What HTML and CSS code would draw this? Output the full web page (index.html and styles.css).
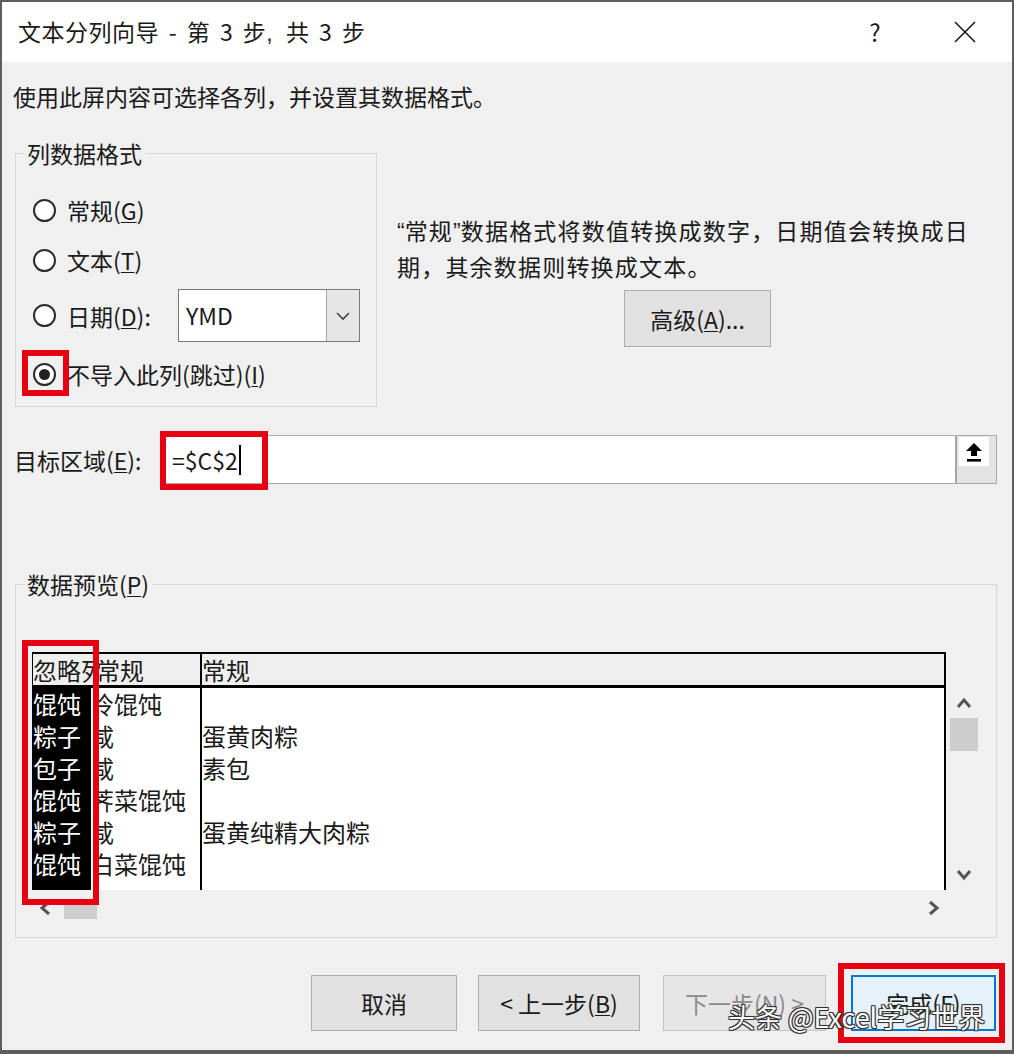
FILE: index.html
```html
<!DOCTYPE html>
<html lang="zh-CN">
<head>
<meta charset="utf-8">
<title>文本分列向导</title>
<link rel="stylesheet" href="styles.css">
</head>
<body>
<div class="window">
  <div class="titlebar">
    <span class="title">文本分列向导 - 第 3 步<span class="narrow">,</span> 共 3 步</span>
    <span class="tb-help">?</span>
    <span class="tb-close">
      <svg width="22" height="22" viewBox="0 0 22 22"><path d="M1 1 L21 21 M21 1 L1 21" stroke="#1a1a1a" stroke-width="1.6" fill="none"/></svg>
    </span>
  </div>

  <div class="content">
    <p class="intro">使用此屏内容可选择各列，并设置其数据格式。</p>

    <div class="top-row">
      <fieldset class="group format">
        <legend>列数据格式</legend>
        <div class="radio-row r1"><span class="radio"></span><span class="radio-text">常规(<u>G</u>)</span></div>
        <div class="radio-row r2"><span class="radio"></span><span class="radio-text">文本(<u>T</u>)</span></div>
        <div class="radio-row r3"><span class="radio"></span><span class="radio-text date-label">日期(<u>D</u>):</span>
          <div class="combo"><span class="combo-val">YMD</span><span class="combo-btn"><svg width="16" height="10" viewBox="0 0 16 10"><polyline points="2,2 8,8 14,2" fill="none" stroke="#444" stroke-width="1.6"/></svg></span></div>
        </div>
        <div class="radio-row r4"><span class="radio checked"></span><span class="radio-text">不导入此列(跳过)(<u>I</u>)</span></div>
      </fieldset>

      <div class="desc">
        <p class="desc-text"><span class="q">“</span>常规<span class="q">”</span>数据格式将数值转换成数字，日期值会转换成日<br>期，其余数据则转换成文本。</p>
        <div class="btn adv">高级(<u>A</u>)...</div>
      </div>
    </div>

    <div class="target-row">
      <span class="target-label">目标区域(<u>E</u>):</span>
      <div class="target-input">
        <span class="target-val">=$C$2</span><span class="caret"></span>
        <span class="collapse-btn">
          <span class="collapse-face">
            <svg width="20" height="22" viewBox="0 0 20 22"><path d="M10 2 L2 10 L7 10 L7 15 L13 15 L13 10 L18 10 Z" fill="#000"/><rect x="3" y="18" width="14" height="2.6" fill="#000"/></svg>
          </span>
        </span>
      </div>
    </div>

    <fieldset class="group preview">
      <legend>数据预览(<u>P</u>)</legend>
      <div class="grid-wrap">
        <div class="grid">
          <div class="ghead">
            <div class="h1">忽略列</div>
            <div class="h2">常规</div>
            <div class="h3">常规</div>
          </div>
          <div class="gdata">
            <div class="dcol1">
              <div>馄饨</div><div>粽子</div><div>包子</div><div>馄饨</div><div>粽子</div><div>馄饨</div>
            </div>
            <div class="dcol2">
              <div>冷馄饨</div><div>咸</div><div>咸</div><div>荠菜馄饨</div><div>咸</div><div>白菜馄饨</div>
            </div>
            <div class="dcol3">
              <div>&nbsp;</div><div>蛋黄肉粽</div><div>素包</div><div>&nbsp;</div><div>蛋黄纯精大肉粽</div><div>&nbsp;</div>
            </div>
          </div>
        </div>
        <div class="vscroll">
          <span class="sarrow"><svg width="16" height="12" viewBox="0 0 16 12"><polyline points="2,10 8,3 14,10" fill="none" stroke="#555" stroke-width="3"/></svg></span>
          <span class="vthumb"></span>
          <span class="vspace"></span>
          <span class="sarrow"><svg width="16" height="12" viewBox="0 0 16 12"><polyline points="2,2 8,9 14,2" fill="none" stroke="#555" stroke-width="3"/></svg></span>
        </div>
      </div>
      <div class="hscroll">
        <span class="harrow"><svg width="12" height="16" viewBox="0 0 12 16"><polyline points="10,2 3,8 10,14" fill="none" stroke="#555" stroke-width="3"/></svg></span>
        <span class="hthumb"></span>
        <span class="hspace"></span>
        <span class="harrow"><svg width="12" height="16" viewBox="0 0 12 16"><polyline points="2,2 9,8 2,14" fill="none" stroke="#555" stroke-width="3"/></svg></span>
      </div>
    </fieldset>

    <div class="buttons">
      <div class="btn b-cancel">取消</div>
      <div class="btn b-prev">&lt; 上一步(<u>B</u>)</div>
      <div class="btn b-next disabled">下一步(<u>N</u>) &gt;</div>
      <div class="btn b-finish">完成(<u>F</u>)</div>
    </div>
  </div>

  <div class="mark m-radio"></div>
  <div class="mark m-target"></div>
  <div class="mark m-col"></div>
  <div class="mark m-finish"></div>
  <div class="watermark">头条 @Excel学习世界</div>
</div>
</body>
</html>
```

FILE: styles.css
```css
* { box-sizing: border-box; }
html, body { margin: 0; padding: 0; }
body {
  font-family: "Noto Sans CJK SC", "Microsoft YaHei", "Noto Sans", sans-serif;
  color: #1a1a1a;
  background: #f0f0f0;
}
u { text-decoration-thickness: 1px; text-underline-offset: 2px; }

.window {
  position: relative;
  width: 1014px;
  height: 1054px;
  border: 2px solid #5e5e5e;
  border-bottom-width: 4px;
  background: #f0f0f0;
  overflow: hidden;
}

/* title bar */
.titlebar {
  height: 60px;
  background: #fff;
  display: flex;
  align-items: center;
  padding: 0 17px 0 16px;
}
.title { flex: 1; font-size: 23px; line-height: 30px; letter-spacing: 0.5px; word-spacing: 4px; white-space: nowrap; }
.narrow { font-family: "Liberation Sans", sans-serif; margin-right: 3px; }
.tb-help { width: 40px; text-align: center; font-size: 24px; line-height: 30px; }
.tb-close { width: 60px; margin-left: 40px; display: flex; justify-content: center; }

/* content */
.content { padding: 0 15px 0 11px; }
.intro { margin: 19px 0 0; font-size: 23px; line-height: 30px; }

.top-row { display: flex; margin-top: 27px; gap: 20px; }

.group {
  margin: 0;
  border: 1px solid #d6d6d6;
  min-width: 0;
}
.group legend {
  padding: 0 3px;
  font-size: 23px;
  line-height: 30px;
}

.format {
  margin-left: 2px;
  width: 362px;
  padding: 22px 0 12px 17px;
}
.format legend { margin-left: -9px; }
.radio-row { display: flex; align-items: center; height: 40px; }
.radio-row.r1 { margin-bottom: 10px; }
.radio-row.r2 { margin-bottom: 9px; }
.radio-row.r3 { height: 53px; margin-bottom: 12px; }
.radio {
  width: 23px; height: 23px;
  border: 2px solid #2b2b2b;
  border-radius: 50%;
  background: #fff;
  display: flex; align-items: center; justify-content: center;
  flex: none;
}
.radio.checked::after {
  content: "";
  width: 11px; height: 11px;
  border-radius: 50%;
  background: #222;
}
.radio-text { margin-left: 11px; font-size: 23px; line-height: 30px; white-space: nowrap; }
.date-label { width: 111px; }

.combo {
  width: 182px; height: 53px;
  border: 1px solid #7a7a7a;
  background: #fff;
  display: flex;
}
.combo-val { flex: 1; padding-left: 7px; font-size: 23px; line-height: 51px; }
.combo-btn {
  width: 33px;
  background: #e6e6e6;
  border-left: 1px solid #a8a8a8;
  display: flex; align-items: center; justify-content: center;
}

.desc { padding-top: 75px; }
.desc-text { margin: 0; font-size: 23px; line-height: 34px; letter-spacing: 1.2px; white-space: nowrap; }
.q { font-family: "Liberation Sans", sans-serif; letter-spacing: 0; }

.btn {
  background: #e1e1e1;
  border: 1px solid #adadad;
  font-size: 23px;
  display: flex; align-items: center; justify-content: center;
  white-space: nowrap;
}
.adv { margin: 7px 0 0 227px; width: 147px; height: 57px; }

/* target */
.target-row { display: flex; align-items: center; margin-top: 28px; margin-left: 1px; height: 49px; }
.target-label { width: 148px; font-size: 23px; line-height: 30px; white-space: nowrap; }
.target-input {
  flex: 1;
  height: 49px;
  border: 1px solid #a9a9a9;
  background: #fff;
  display: flex; align-items: center;
}
.target-val { padding-left: 9px; font-size: 23px; line-height: 30px; }
.caret { width: 2px; height: 30px; background: #000; margin-left: 1px; }
.collapse-btn {
  margin-left: auto;
  width: 41px; height: 47px;
  background: #e3e3e3;
  border-left: 2px solid #a5a5a5;
  padding: 1px 7px 0 2px;
}
.collapse-face {
  display: flex; align-items: center; justify-content: center;
  height: 29px; background: #fff;
}

/* preview */
.preview { margin: 85px 0 0 2px; padding: 53px 16px 12px 16px; }
.preview legend { margin-left: -8px; }
.grid-wrap { display: flex; }
.grid {
  width: 915px;
  border-top: 2px solid #000;
  border-right: 2px solid #000;
  border-left: 1px solid #000;
  font-size: 24px;
}
.ghead {
  display: flex;
  height: 34px;
  background: #efefef;
  border-bottom: 3px solid #000;
  line-height: 31px;
}
.ghead > div { white-space: nowrap; overflow: hidden; }
.h1 { width: 63px; }
.h2 { width: 104px; }
.h3 { flex: 1; border-left: 2px solid #000; }

.gdata { display: flex; height: 202px; background: #fff; line-height: 32px; }
.dcol1 { width: 58px; background: #000; color: #fff; white-space: nowrap; overflow: hidden; }
.dcol2 { width: 103px; margin-left: 6px; overflow: hidden; white-space: nowrap; }
.dcol2 > div { margin-left: -7px; }
.dcol3 { flex: 1; border-left: 2px solid #000; white-space: nowrap; }

.vscroll {
  width: 33px; margin-left: 1px;
  height: 238px;
  padding-top: 36px;
  display: flex; flex-direction: column; align-items: center;
}
.sarrow { height: 30px; display: flex; align-items: center; justify-content: center; }
.vthumb { width: 28px; height: 33px; background: #cdcdcd; }
.vspace { flex: 1; }

.hscroll { display: flex; align-items: center; width: 915px; height: 35px; }
.harrow { width: 26px; height: 35px; display: flex; align-items: center; justify-content: center; }
.hthumb { width: 33px; height: 18px; background: #cdcdcd; margin-left: 6px; margin-top: 4px; }
.hspace { flex: 1; }

/* buttons */
.buttons { display: flex; justify-content: flex-end; margin-top: 37px; padding-right: 1px; }
.buttons .btn { height: 56px; }
.b-cancel { width: 146px; }
.b-prev { width: 162px; margin-left: 21px; }
.b-next { width: 163px; margin-left: 23px; }
.b-finish { width: 145px; margin-left: 25px; }
.disabled { color: #8a8a8a; background: #e6e6e6; border-color: #c4c4c4; }
.b-finish { background: #e5f1fb; border: 2px solid #0078d7; }

/* annotation overlays */
.mark { position: absolute; border: 6px solid #e60012; pointer-events: none; }
.m-radio { left: 20px; top: 348px; width: 47px; height: 46px; }
.m-target { left: 158px; top: 429px; width: 108px; height: 59px; }
.m-col { left: 20px; top: 638px; width: 77px; height: 265px; }
.m-finish { left: 836px; top: 961px; width: 167px; height: 80px; }

.watermark {
  position: absolute;
  left: 726px; top: 997px;
  font-size: 27px; line-height: 36px;
  color: #fff;
  white-space: nowrap;
  text-shadow: 1px 1px 0 #333, -1px -1px 0 #333, 1px -1px 0 #333, -1px 1px 0 #333, 0 0 2px #333;
}
```
